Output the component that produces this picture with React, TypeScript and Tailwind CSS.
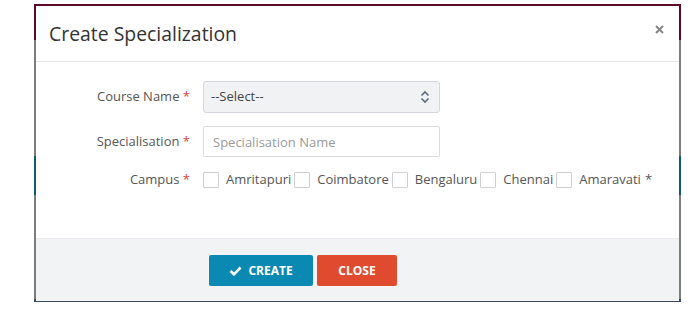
import { useState } from 'react';

const campuses = ['Amritapuri', 'Coimbatore', 'Bengaluru', 'Chennai', 'Amaravati'];

function Required() {
  return <span className="text-[#e0413a]"> *</span>;
}

function FieldLabel({ children }: { children: React.ReactNode }) {
  return (
    <label className="w-[155px] shrink-0 pr-[1px] text-right text-[13px] text-[#555]">
      {children}
      <Required />
    </label>
  );
}

export default function App() {
  const [checked, setChecked] = useState<string[]>([]);

  const toggle = (name: string) =>
    setChecked((prev) => (prev.includes(name) ? prev.filter((c) => c !== name) : [...prev, name]));

  return (
    <div className="h-[317px] w-[700px] bg-white pt-[4px] pl-[34px] font-['Open_Sans',sans-serif]">
      {/* backdrop peeking around the modal edges */}
      <div className="h-[298px] w-[647px] bg-[linear-gradient(to_bottom,#5b0b27_0px,#5b0b27_36px,#7c7c7c_36px,#7c7c7c_152px,#0f5b72_152px,#0f5b72_191px,#7c7c7c_191px,#7c7c7c_295px,#3d4a5e_295px)] pt-[2px] pr-[2px] pb-[1px] pl-[2px]">
        <div className="flex h-full flex-col bg-white">
          {/* header */}
          <div className="flex h-[56px] shrink-0 items-center justify-between border-b border-[#e5e5e5] pr-[15px] pl-[13px]">
            <h4 className="text-[19.4px] text-[#333]">Create Specialization</h4>
            <button className="mb-[8px] text-[#858585]" aria-label="Close">
              <svg width="9" height="9" viewBox="0 0 9 9" fill="none" stroke="currentColor" strokeWidth="2">
                <path d="M1 1 L8 8 M8 1 L1 8" />
              </svg>
            </button>
          </div>

          {/* body */}
          <div className="flex flex-1 flex-col gap-[13px] pt-[19px]">
            <div className="flex items-center gap-[12px]">
              <FieldLabel>Course Name</FieldLabel>
              <div className="flex h-[32px] w-[237px] items-center justify-between rounded-[3px] border border-[#d3d7dd] bg-[#f1f2f4] pr-[9px] pl-[7px] text-[13px] text-[#444]">
                <span>--Select--</span>
                <svg width="10" height="14" viewBox="0 0 10 14" fill="none" stroke="#5d6b80" strokeWidth="1.6">
                  <path d="M1.5 5.5 L5 2 L8.5 5.5 M1.5 8.5 L5 12 L8.5 8.5" />
                </svg>
              </div>
            </div>

            <div className="flex items-center gap-[12px]">
              <FieldLabel>Specialisation</FieldLabel>
              <input
                className="h-[31px] w-[237px] rounded-[2px] border border-[#dcdcdc] px-[9px] text-[13px] text-[#444] outline-none placeholder:text-[#9a9a9a]"
                placeholder="Specialisation Name"
              />
            </div>

            <div className="flex items-center gap-[12px]">
              <FieldLabel>Campus</FieldLabel>
              <div className="flex items-center text-[13px] text-[#555]">
                {campuses.map((c) => (
                  <label key={c} className="mr-[3px] flex items-center">
                    <input
                      type="checkbox"
                      checked={checked.includes(c)}
                      onChange={() => toggle(c)}
                      className="h-[16px] w-[16px] appearance-none rounded-[1px] border border-[#cfcfcf] bg-white"
                    />
                    <span className="ml-[7px]">{c}</span>
                  </label>
                ))}
                <span className="ml-[1px]">*</span>
              </div>
            </div>
          </div>

          {/* footer */}
          <div className="flex h-[63px] shrink-0 items-start gap-[4px] border-t border-[#e8eaee] bg-[#f2f3f5] pt-[16px] pl-[173px]">
            <button className="flex h-[31px] w-[104px] items-center justify-center gap-[6px] rounded-[2px] bg-[#0a8ab2] text-[12px] font-bold text-white">
              <svg width="13" height="10" viewBox="0 0 13 10" fill="none" stroke="white" strokeWidth="2.6">
                <path d="M1.5 5 L5 8.3 L11.5 1.5" />
              </svg>
              CREATE
            </button>
            <button className="h-[31px] w-[80px] rounded-[2px] bg-[#e04b30] text-[12px] font-bold text-white">
              CLOSE
            </button>
          </div>
        </div>
      </div>
    </div>
  );
}
